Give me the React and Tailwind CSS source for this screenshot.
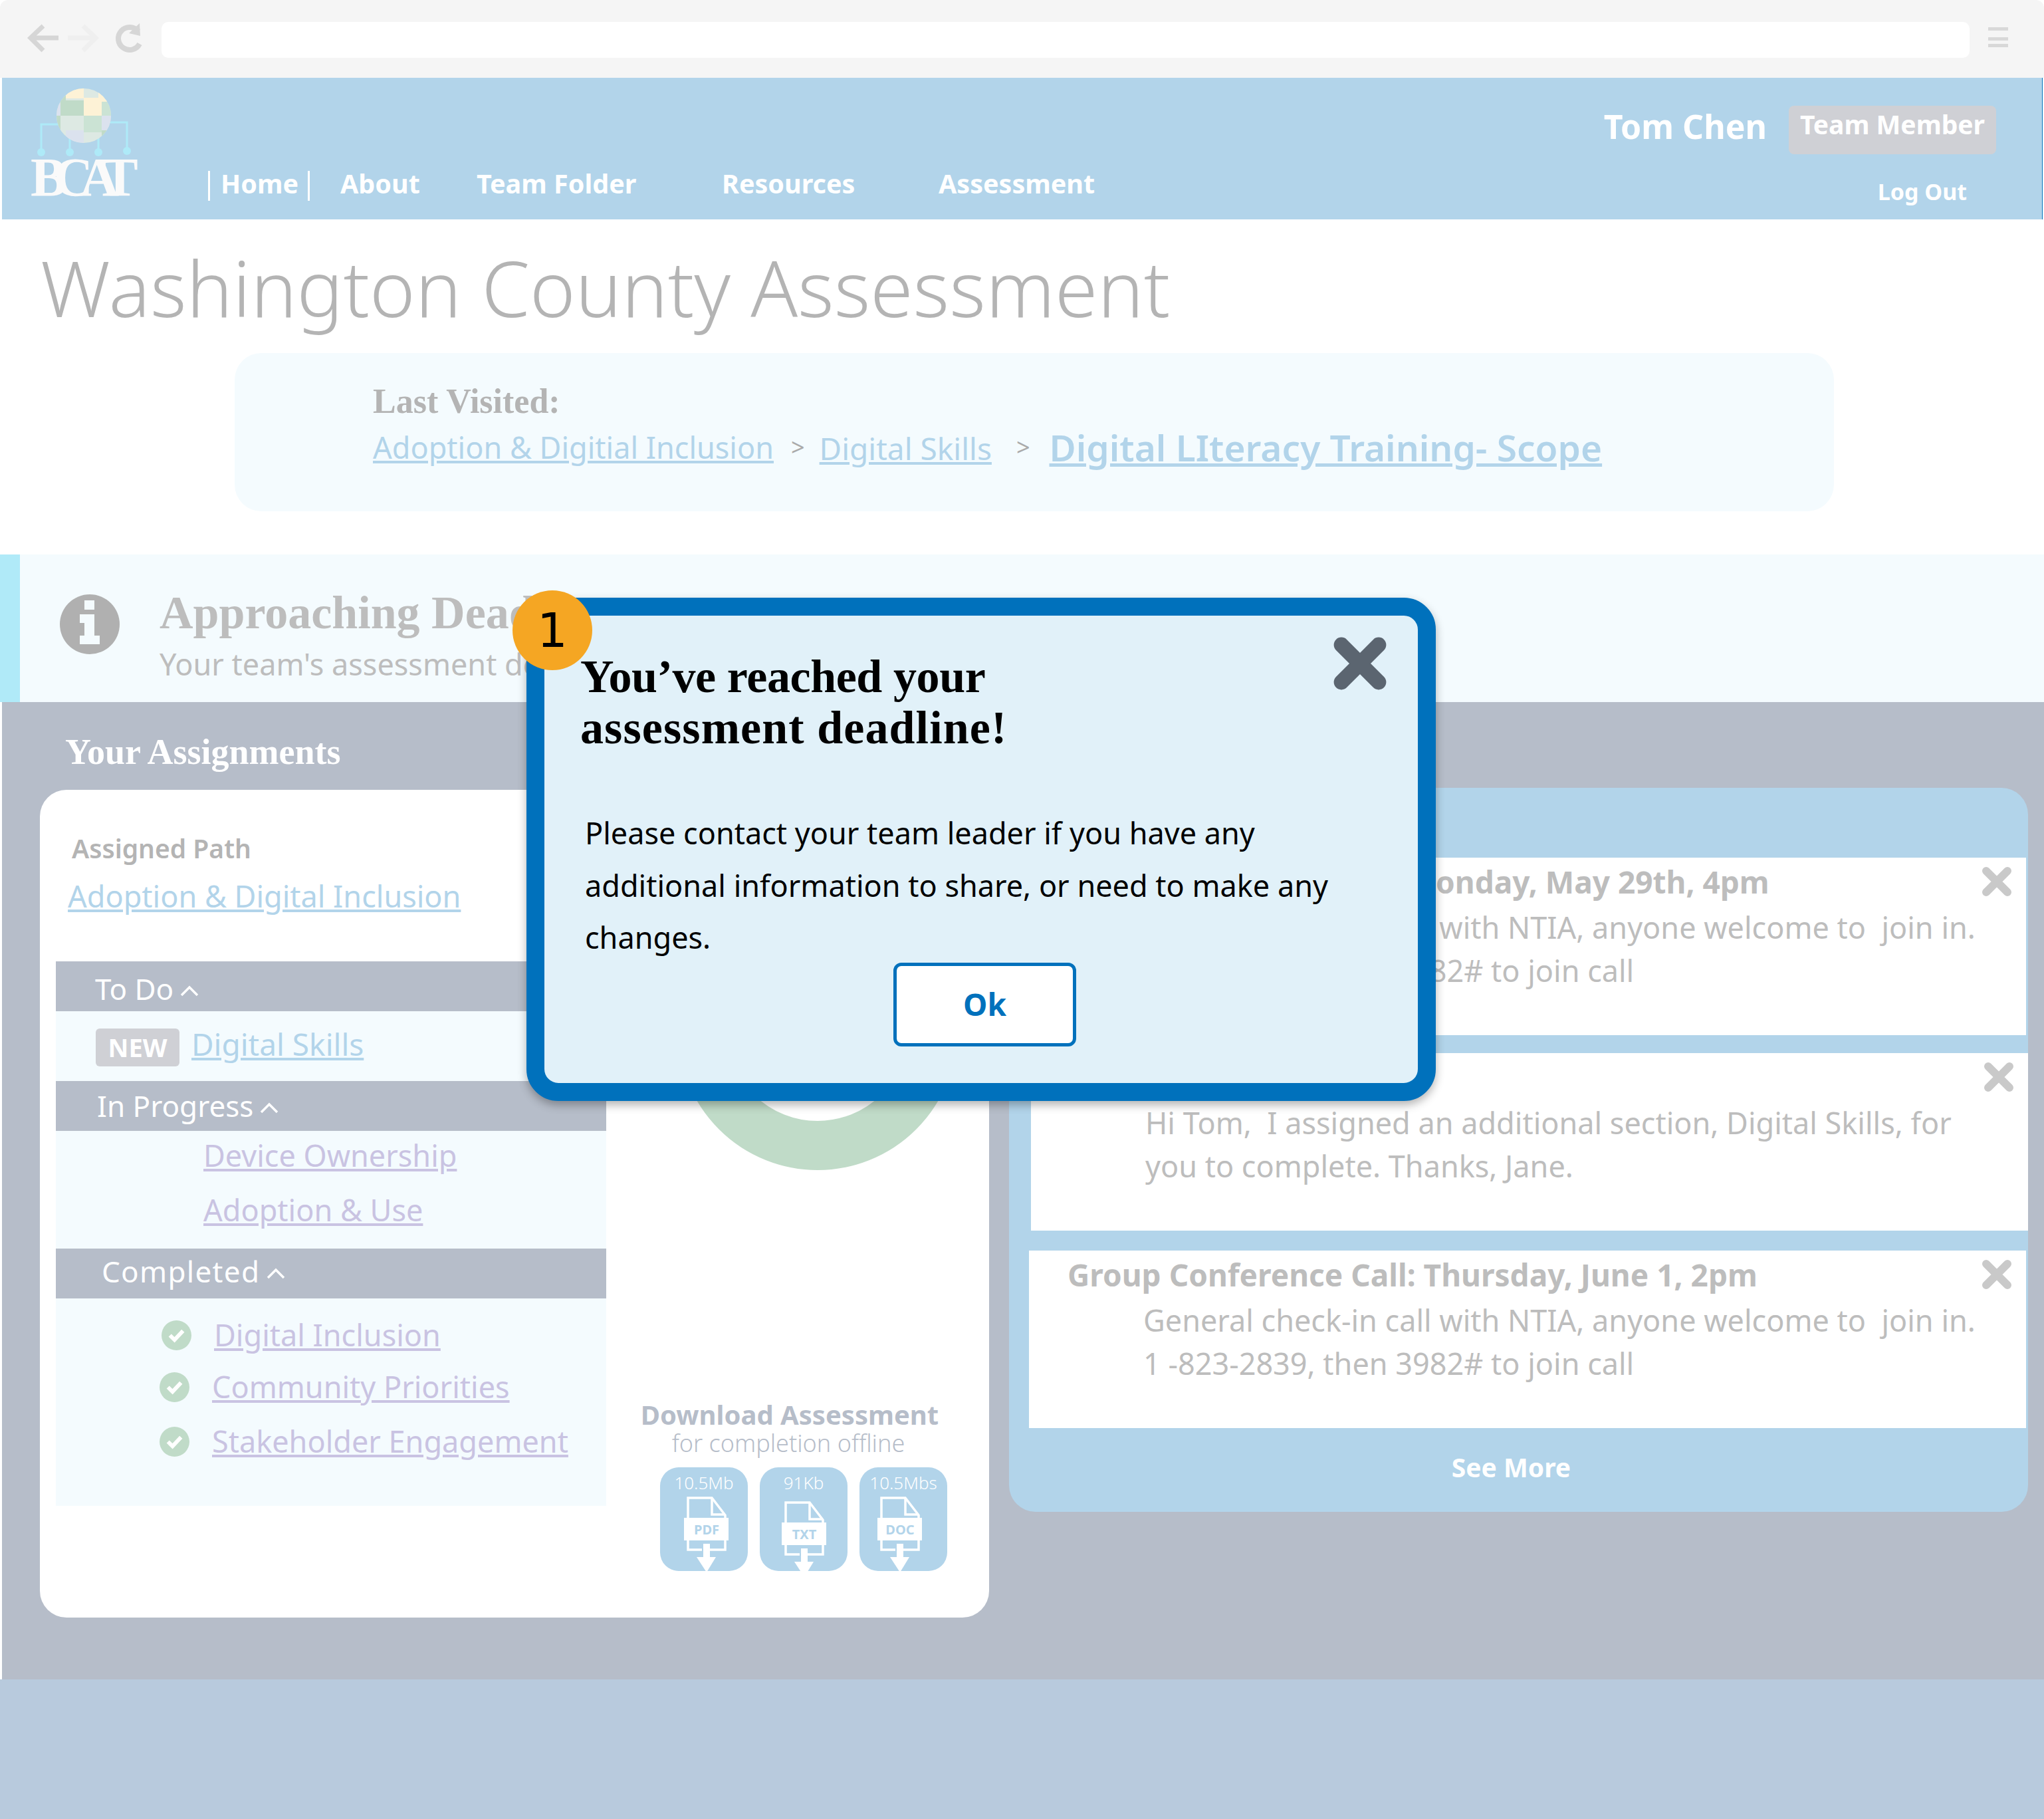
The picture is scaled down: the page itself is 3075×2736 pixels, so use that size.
import React from 'react';

const X = ({ className, color = '#c9c9c9', sw = 12 }) => (
  <svg viewBox="0 0 48 48" className={className}>
    <path d="M8 8 L40 40 M40 8 L8 40" stroke={color} strokeWidth={sw} strokeLinecap="round" fill="none" />
  </svg>
);

const Chevron = () => (
  <svg viewBox="0 0 28 18" className="w-[28px] h-[18px] ml-[10px] mt-[8px]">
    <path d="M2 15 L14 3 L26 15" stroke="#fff" strokeWidth="3.5" fill="none" />
  </svg>
);

const Check = ({ className }) => (
  <svg viewBox="0 0 46 46" className={className}>
    <circle cx="23" cy="23" r="23" fill="#c0dbc8" />
    <path d="M13 23 L20 30 L33 16" stroke="#fff" strokeWidth="6" fill="none" />
  </svg>
);

const Tile = ({ size, label, dx, y0 }) => (
  <div className="relative w-[132px] h-[156px] rounded-[28px] bg-[#b2d4ea] text-center text-white text-[26px] leading-[46px] font-light">
    {size}
    <svg viewBox="0 0 132 156" className="absolute inset-0 w-[132px] h-[156px]">
      <g stroke="#fff" strokeWidth="3.5" fill="none" transform={`translate(${dx} ${y0})`}>
        <path d="M1 33 V1 H37 L57 27 V33" />
        <path d="M37 1 V26 H57" />
        <path d="M1 64 V79 H22 M34 79 H57 V64" />
      </g>
      <g transform={`translate(${dx} ${y0})`}>
        <rect x="-5" y="31" width="67" height="34" fill="#fff" />
        <text x="29" y="56" textAnchor="middle" fontFamily="Noto Sans" fontWeight="700" fontSize="20" fill="#b2d4ea">{label}</text>
        <rect x="24" y="70" width="10" height="22" fill="#fff" />
        <polygon points="14,90 43,90 29,113" fill="#fff" />
      </g>
    </svg>
  </div>
);

const GroupHeader = ({ children, className }) => (
  <div className={`h-[75px] bg-[#b6bdc9] flex items-center text-white text-[44px] font-normal ${className}`}>
    {children}
    <Chevron />
  </div>
);

const Card = ({ title, lines, className, titlePl = 'pl-[58px]' }) => (
  <div className={`relative bg-white h-[267px] text-[#bdbdbd] ${className}`}>
    <div className={`h-[66px] flex items-end text-[46px] font-bold leading-[60px] whitespace-nowrap ${titlePl}`}>{title}</div>
    <div className="pl-[172px] pt-[6px] text-[45px] font-normal leading-[65px] whitespace-pre">
      {lines.map((l) => <div key={l}>{l}</div>)}
    </div>
    <X className="absolute right-[20px] top-[12px] w-[48px] h-[48px]" />
  </div>
);

export default function App() {
  return (
    <div className="relative w-[3075px] h-[2736px] overflow-hidden bg-white font-['Noto_Sans',sans-serif] flex flex-col">
      {/* browser bar */}
      <div className="h-[117px] shrink-0 bg-[#f5f5f5] rounded-t-[12px] flex items-start pt-[33px]">
        <svg viewBox="0 0 200 54" className="w-[200px] h-[54px] ml-[30px]">
          <path d="M35 6 L16 24 L35 43 M16 24 H58" stroke="#d6d6d6" strokeWidth="7" fill="none" />
          <path d="M95 6 L114 24 L95 43 M72 24 H114" stroke="#efefef" strokeWidth="7" fill="none" />
          <path d="M178 14 A17 17 0 1 0 180 33" stroke="#d6d6d6" strokeWidth="8" fill="none" />
          <polygon points="180,2 181,21 164,17" fill="#d6d6d6" />
        </svg>
        <div className="w-[2720px] h-[54px] ml-[13px] bg-white rounded-[10px]" />
        <div className="ml-[28px] mt-[8px] w-[30px] flex flex-col">
          <div className="h-[5px] bg-[#d8d8d8]" />
          <div className="h-[5px] mt-[10px] bg-[#d8d8d8]" />
          <div className="h-[5px] mt-[5px] bg-[#d8d8d8]" />
        </div>
      </div>

      {/* header */}
      <div className="h-[213px] shrink-0 ml-[3px] mr-[2px] bg-[#b2d4ea] border-r-[1px] border-[#0071bc] flex text-white font-bold">
        <div className="w-[240px] shrink-0 pl-[44px] flex flex-col">
          <svg viewBox="0 0 170 122" className="w-[170px] h-[122px]">
            <defs>
              <clipPath id="globe"><circle cx="79" cy="57" r="41" /></clipPath>
            </defs>
            <g stroke="#aeeaf8" strokeWidth="3" fill="none">
              <path d="M15 111 V70 H45" />
              <path d="M58 111 V85" />
              <path d="M101 111 V85" />
              <path d="M144 109 V67 H112" />
            </g>
            <g fill="#aeeaf8">
              <circle cx="15" cy="112" r="6" />
              <circle cx="58" cy="112" r="6" />
              <circle cx="101" cy="112" r="6" />
              <circle cx="144" cy="110" r="6" />
            </g>
            <g clipPath="url(#globe)">
              <rect x="30" y="10" width="100" height="100" fill="#dde9e3" />
              <rect x="30" y="10" width="22" height="25" fill="#c2dbc8" />
              <rect x="52" y="10" width="27" height="21" fill="#fdf2d6" />
              <rect x="101" y="10" width="30" height="26" fill="#fdf2d6" />
              <rect x="30" y="38" width="14" height="20" fill="#dbe2ee" />
              <rect x="44" y="34" width="35" height="23" fill="#c0dbc8" />
              <rect x="79" y="30" width="27" height="27" fill="#fdf2d6" />
              <rect x="106" y="36" width="20" height="21" fill="#cbe3d4" />
              <rect x="30" y="57" width="14" height="25" fill="#c0dbc8" />
              <rect x="79" y="57" width="27" height="25" fill="#cbe3d4" />
              <rect x="106" y="57" width="20" height="22" fill="#dbe2ee" />
              <rect x="52" y="79" width="27" height="24" fill="#dbe2ee" />
              <rect x="106" y="79" width="20" height="24" fill="#c0dbc8" />
            </g>
          </svg>
          <span className="font-['Liberation_Serif',serif] font-bold text-[#fafafa] text-[82px] leading-[60px] tracking-[-20px] -ml-[1px] -mt-[2px]">BCAT</span>
        </div>
        <nav className="flex items-start pt-[136px] text-[39.5px] leading-[46px] whitespace-nowrap">
          <span className="w-[3px] h-[45px] bg-white ml-[70px] mt-[4px]" />
          <span className="ml-[16px] w-[113px]">Home</span>
          <span className="w-[3px] h-[45px] bg-white ml-[18px] mt-[4px]" />
          <span className="ml-[46px] w-[119px]">About</span>
          <span className="ml-[86px] w-[243px]">Team Folder</span>
          <span className="ml-[126px] w-[201px]">Resources</span>
          <span className="ml-[125px]">Assessment</span>
        </nav>
        <div className="ml-auto flex flex-col items-end pr-[69px] pt-[42px]">
          <div className="flex items-start">
            <span className="text-[50px] leading-[60px] mt-[1px]">Tom Chen</span>
            <span className="ml-[33px] w-[312px] h-[73px] rounded-[8px] bg-[#cfd0d5] text-[39px] leading-[56px] pl-[17px]">Team Member</span>
          </div>
          <span className="text-[34px] leading-[48px] mr-[44px] mt-[32px]">Log Out</span>
        </div>
      </div>

      {/* title */}
      <div className="h-[201px] shrink-0 pl-[61px] pt-[42px] text-[#b4b4b4] text-[116.5px] leading-[120px] font-light whitespace-nowrap">
        Washington County Assessment
      </div>

      {/* last visited */}
      <div className="h-[238px] shrink-0 ml-[353px] w-[2406px] rounded-[40px] bg-[#f4fbfe] pl-[208px] pt-[43px]">
        <div className="font-['Liberation_Serif',serif] font-bold text-[52px] leading-[60px] text-[#b4b4b4]">Last Visited:</div>
        <div className="flex items-center h-[70px] mt-[4px] text-[#b2d4ea] text-[45px] whitespace-nowrap">
          <a className="underline">Adoption &amp; Digitial Inclusion</a>
          <span className="ml-[26px] text-[#aaaaaa] text-[36px]">&gt;</span>
          <a className="underline ml-[22px] mt-[2px] text-[46px]">Digital Skills</a>
          <span className="ml-[37px] text-[#aaaaaa] text-[36px]">&gt;</span>
          <a className="underline font-semibold ml-[29px] text-[55px]">Digital LIteracy Training- Scope</a>
        </div>
      </div>

      {/* info band */}
      <div className="h-[222px] shrink-0 mt-[65px] flex bg-[#f4fbfe]">
        <div className="w-[30px] bg-[#b0eaf8]" />
        <svg viewBox="0 0 90 90" className="w-[90px] h-[90px] ml-[60px] mt-[60px]">
          <circle cx="45" cy="45" r="45" fill="#b0b0b0" />
          <path d="M37 9 H52 V23 H37 Z M30 30 H52 V62 H60 V75 H30 V62 H37 V43 H30 Z" fill="#f4fbfe" />
        </svg>
        <div className="ml-[60px] pt-[47px]">
          <div className="font-['Liberation_Serif',serif] font-bold text-[70px] leading-[82px] text-[#bdbdbd] whitespace-nowrap">Approaching Deadline</div>
          <div className="text-[45px] leading-[64px] mt-[4px] text-[#bdbdbd] whitespace-nowrap">Your team's assessment deadline</div>
        </div>
      </div>

      {/* gray region */}
      <div className="h-[1470px] shrink-0 ml-[3px] bg-[#b6bdc9] flex">
        <div className="ml-[57px] w-[1428px] shrink-0">
          <div className="h-[132px] pl-[38px] pt-[44px] font-['Liberation_Serif',serif] font-bold text-white text-[54px] leading-[62px]">Your Assignments</div>
          <div className="h-[1245px] bg-white rounded-[40px] flex">
            <div className="w-[852px] shrink-0 pl-[24px]">
              <div className="h-[258px] pt-[58px]">
                <div className="pl-[24px] text-[#b4b4b4] text-[39px] leading-[60px] font-semibold">Assigned Path</div>
                <a className="block pl-[18px] mt-[2px] text-[#b2d4ea] text-[45px] leading-[80px] underline">Adoption &amp; Digital Inclusion</a>
              </div>
              <div className="w-[828px] h-[819px] bg-[#f4fbfe]">
                <GroupHeader className="pl-[59px] pt-[6px]">To Do</GroupHeader>
                <div className="h-[105px] pl-[60px] flex items-center">
                  <span className="w-[126px] h-[57px] mt-[4px] rounded-[6px] bg-[#cfd0d5] text-white font-bold text-[38px] leading-[57px] text-center">NEW</span>
                  <a className="ml-[18px] -mt-[7px] text-[#b2d4ea] text-[46px] underline">Digital Skills</a>
                </div>
                <GroupHeader className="pl-[62px] pb-[1px]">In Progress</GroupHeader>
                <div className="h-[177px] flex flex-col items-start pl-[222px] text-[#c9c3e2] text-[45px] leading-[82px]">
                  <a className="-mt-[4px] underline">Device Ownership</a>
                  <a className="underline">Adoption &amp; Use</a>
                </div>
                <GroupHeader className="pl-[69px] pb-[8px] tracking-[1.3px]">Completed</GroupHeader>
                <div className="pt-[17px] text-[#c9c3e2] text-[45px] leading-[82px]">
                  <div className="flex items-center h-[76px] pl-[159px]">
                    <Check className="w-[45px] h-[45px]" />
                    <a className="ml-[34px] underline">Digital Inclusion</a>
                  </div>
                  <div className="flex items-center h-[80px] pl-[156px]">
                    <Check className="w-[45px] h-[45px]" />
                    <a className="ml-[34px] underline">Community Priorities</a>
                  </div>
                  <div className="flex items-center h-[84px] pl-[156px]">
                    <Check className="w-[45px] h-[45px]" />
                    <a className="ml-[34px] underline">Stakeholder Engagement</a>
                  </div>
                </div>
              </div>
            </div>
            <div className="flex-1 flex flex-col pt-[152px]">
              <svg viewBox="0 0 420 420" className="w-[420px] h-[420px] ml-[108px]">
                <circle cx="210" cy="210" r="173" stroke="#c0dbc8" strokeWidth="74" fill="none" />
              </svg>
              <div className="w-[552px] mt-[341px] text-center text-[#b6bdc9]">
                <div className="text-[40px] leading-[54px] font-bold whitespace-nowrap">Download Assessment</div>
                <div className="text-[36px] leading-[32px] font-light -ml-[4px]">for completion offline</div>
              </div>
              <div className="flex gap-[18px] ml-[81px] mt-[20px]">
                <Tile size="10.5Mb" label="PDF" dx={41} y0={45} />
                <Tile size="91Kb" label="TXT" dx={38} y0={52} />
                <Tile size="10.5Mbs" label="DOC" dx={32} y0={45} />
              </div>
            </div>
          </div>
        </div>
        <div className="ml-[30px] mt-[129px] w-[1533px] h-[1089px] rounded-[40px] bg-[#b2d4ea] flex flex-col">
          <div className="h-[105px] shrink-0" />
          <Card className="ml-[30px] w-[1500px]" titlePl="pl-[33px]" title="Group Conference Call: Monday, May 29th, 4pm" lines={['General check-in call with NTIA, anyone welcome to  join in.', '1 -823-2839, then 3982# to join call']} />
          <Card className="ml-[33px] w-[1500px] mt-[27px]" title="" lines={['Hi Tom,  I assigned an additional section, Digital Skills, for', 'you to complete. Thanks, Jane.']} />
          <Card className="ml-[30px] w-[1500px] mt-[30px]" title="Group Conference Call: Thursday, June 1, 2pm" lines={['General check-in call with NTIA, anyone welcome to  join in.', '1 -823-2839, then 3982# to join call']} />
          <div className="flex-1 flex items-center justify-center text-white text-[39px] font-bold -ml-[22px] -mt-[8px]">See More</div>
        </div>
      </div>
      <div className="flex-1 bg-[#b8cadd]" />

      {/* modal */}
      <div className="absolute left-[792px] top-[899px] w-[1368px] h-[757px] rounded-[48px] border-[27px] border-[#0071bc] bg-[#e1f1f9] shadow-[0_6px_14px_rgba(0,0,0,0.3)]">
        <div className="pl-[54px] pt-[53px] font-['Liberation_Serif',serif] font-bold text-black text-[70px] leading-[77px]">
          <div className="tracking-[-0.4px]">You’ve reached your</div>
          <div className="tracking-[1.1px]">assessment deadline!</div>
        </div>
        <div className="pl-[61px] pt-[81px] text-black text-[45px] leading-[78.5px] font-normal">
          Please contact your team leader if you have any<br />
          additional information to share, or need to make any<br />
          changes.
        </div>
        <button className="block ml-[525px] -mt-[2px] w-[275px] h-[126px] bg-white border-[5px] border-[#0071bc] rounded-[12px] text-[#0071bc] font-bold text-[46px]">Ok</button>
        <X className="absolute right-[45px] top-[30px] w-[84px] h-[84px]" color="#5b6570" sw={13} />
      </div>
      <div className="absolute left-[771px] top-[888px] w-[120px] h-[120px] rounded-full bg-[#f5a623] flex items-center justify-center text-black text-[72px] font-['DejaVu_Sans',sans-serif]">1</div>
    </div>
  );
}
